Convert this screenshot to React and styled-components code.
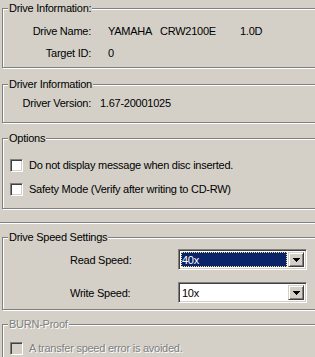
import React from "react";
import styled, { createGlobalStyle } from "styled-components";

const GlobalStyle = createGlobalStyle`
  html, body {
    margin: 0;
    padding: 0;
    background: #d4d0c8;
    overflow: hidden;
  }
  body {
    font-family: "Liberation Sans", Arial, sans-serif;
    font-size: 11px;
    letter-spacing: -0.25px;
    color: #000;
  }
`;

const Page = styled.div`
  width: 315px;
  height: 357px;
  overflow: hidden;
  display: flex;
  flex-direction: column;
`;

const Group = styled.div`
  position: relative;
  margin: ${(p) => p.$top}px -40px 0 2px;
  height: ${(p) => p.$h}px;
  box-sizing: border-box;
  border: 1px solid #808080;
  box-shadow: inset 1px 1px 0 #fff, 1px 1px 0 #fff;
  flex-shrink: 0;
`;

const Legend = styled.span`
  position: absolute;
  top: -7px;
  left: 5px;
  padding: 0 1px;
  line-height: 13px;
  background: #d4d0c8;
  color: ${(p) => (p.$disabled ? "#808080" : "#000")};
  text-shadow: ${(p) => (p.$disabled ? "1px 1px 0 #fff" : "none")};
`;

const Separator = styled.div`
  margin-top: ${(p) => p.$top}px;
  height: 1px;
  background: #808080;
  border-bottom: 1px solid #fff;
  flex-shrink: 0;
`;

const InfoRows = styled.div`
  display: flex;
  flex-direction: column;
  gap: ${(p) => p.$gap || 9}px;
  padding-top: ${(p) => p.$pad}px;
`;

const InfoRow = styled.div`
  display: flex;
  line-height: 13px;
  white-space: nowrap;
`;

const InfoLabel = styled.span`
  width: 88px;
  text-align: right;
  flex-shrink: 0;
`;

const InfoValue = styled.span`
  margin-left: ${(p) => p.$gap}px;
  width: ${(p) => (p.$w ? `${p.$w}px` : "auto")};
  flex-shrink: 0;
`;

const CheckList = styled.div`
  display: flex;
  flex-direction: column;
  gap: 11px;
  padding: ${(p) => p.$pad}px 0 0 7px;
`;

const CheckRow = styled.label`
  display: flex;
  align-items: center;
  gap: 6px;
  line-height: 13px;
  white-space: nowrap;
  color: ${(p) => (p.$disabled ? "#808080" : "#000")};
  text-shadow: ${(p) => (p.$disabled ? "1px 1px 0 #fff" : "none")};
`;

const Box = styled.span`
  width: 13px;
  height: 13px;
  box-sizing: border-box;
  flex-shrink: 0;
  border-top: 1px solid #808080;
  border-left: 1px solid #808080;
  border-right: 1px solid #fff;
  border-bottom: 1px solid #fff;
  box-shadow: inset 1px 1px 0 #404040, inset -1px -1px 0 #d4d0c8;
  background: ${(p) => (p.$disabled ? "#d4d0c8" : "#fff")};
`;

const SpeedRows = styled.div`
  display: flex;
  flex-direction: column;
  gap: 12px;
  padding-top: 11px;
`;

const SpeedRow = styled.div`
  display: flex;
  align-items: center;
`;

const SpeedLabel = styled.span`
  width: 175px;
  padding-left: 67px;
  flex-shrink: 0;
  box-sizing: border-box;
  white-space: nowrap;
`;

const Combo = styled.div`
  width: 129px;
  height: 21px;
  box-sizing: border-box;
  flex-shrink: 0;
  display: flex;
  align-items: stretch;
  border-top: 1px solid #808080;
  border-left: 1px solid #808080;
  border-right: 1px solid #fff;
  border-bottom: 1px solid #fff;
  box-shadow: inset 1px 1px 0 #404040, inset -1px -1px 0 #d4d0c8;
  padding: 2px;
  background: #fff;
`;

const ComboText = styled.div`
  flex: 1;
  display: flex;
  align-items: center;
  padding-left: 1px;
  margin-right: 1px;
  background: ${(p) => (p.$selected ? "#0a246a" : "#fff")};
  color: ${(p) => (p.$selected ? "#fff" : "#000")};
  outline: ${(p) => (p.$selected ? "1px dotted #f5e08a" : "none")};
  outline-offset: -1px;
`;

const DropButton = styled.div`
  width: 16px;
  box-sizing: border-box;
  background: #d4d0c8;
  border-top: 1px solid #d4d0c8;
  border-left: 1px solid #d4d0c8;
  border-right: 1px solid #404040;
  border-bottom: 1px solid #404040;
  box-shadow: inset 1px 1px 0 #fff, inset -1px -1px 0 #808080;
  display: flex;
  align-items: center;
  justify-content: center;
`;

const Arrow = () => (
  <svg width="7" height="4" viewBox="0 0 7 4">
    <path d="M0 0h7v1H0zM1 1h5v1H1zM2 2h3v1H2zM3 3h1v1H3z" fill="#000" />
  </svg>
);

const SpeedSelect = ({ value, selected }) => (
  <Combo>
    <ComboText $selected={selected}>{value}</ComboText>
    <DropButton>
      <Arrow />
    </DropButton>
  </Combo>
);

export default function App() {
  return (
    <Page>
      <GlobalStyle />
      <Group $top={8} $h={60}>
        <Legend>Drive Information:</Legend>
        <InfoRows $pad={16}>
          <InfoRow>
            <InfoLabel>Drive Name:</InfoLabel>
            <InfoValue $gap={17} $w={52}>YAMAHA</InfoValue>
            <InfoValue $gap={0} $w={80}>CRW2100E</InfoValue>
            <InfoValue $gap={0}>1.0D</InfoValue>
          </InfoRow>
          <InfoRow>
            <InfoLabel>Target ID:</InfoLabel>
            <InfoValue $gap={17}>0</InfoValue>
          </InfoRow>
        </InfoRows>
      </Group>

      <Group $top={16} $h={39}>
        <Legend>Driver Information</Legend>
        <InfoRows $pad={12}>
          <InfoRow>
            <InfoLabel>Driver Version:</InfoLabel>
            <InfoValue $gap={9}>1.67-20001025</InfoValue>
          </InfoRow>
        </InfoRows>
      </Group>

      <Group $top={15} $h={71}>
        <Legend>Options</Legend>
        <CheckList $pad={20}>
          <CheckRow>
            <Box />
            Do not display message when disc inserted.
          </CheckRow>
          <CheckRow>
            <Box />
            Safety Mode (Verify after writing to CD-RW)
          </CheckRow>
        </CheckList>
      </Group>

      <Separator $top={13} />

      <Group $top={13} $h={73}>
        <Legend>Drive Speed Settings</Legend>
        <SpeedRows>
          <SpeedRow>
            <SpeedLabel>Read Speed:</SpeedLabel>
            <SpeedSelect value="40x" selected />
          </SpeedRow>
          <SpeedRow>
            <SpeedLabel>Write Speed:</SpeedLabel>
            <SpeedSelect value="10x" />
          </SpeedRow>
        </SpeedRows>
      </Group>

      <Group $top={14} $h={60}>
        <Legend $disabled>BURN-Proof</Legend>
        <CheckList $pad={17}>
          <CheckRow $disabled>
            <Box $disabled />
            A transfer speed error is avoided.
          </CheckRow>
        </CheckList>
      </Group>
    </Page>
  );
}
